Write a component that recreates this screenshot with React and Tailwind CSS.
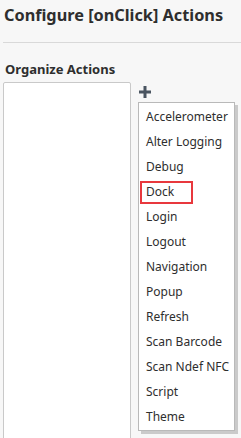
import React from 'react';

const actions = [
  'Accelerometer',
  'Alter Logging',
  'Debug',
  'Dock',
  'Login',
  'Logout',
  'Navigation',
  'Popup',
  'Refresh',
  'Scan Barcode',
  'Scan Ndef NFC',
  'Script',
  'Theme',
];

export default function App() {
  return (
    <div
      className="w-[241px] h-[438px] overflow-hidden bg-[#f7f7f7] text-[#2e2e2e]"
      style={{ fontFamily: '"Noto Sans", "Open Sans", sans-serif' }}
    >
      {/* header */}
      <div className="pl-[1px] pt-[2px] h-[43px] border-b border-[#d9d9d9] ml-[3px]">
        <h1 className="text-[16.3px] leading-[26px] font-bold">
          Configure [onClick] Actions
        </h1>
      </div>

      <div className="px-[3px] pt-[16px]">
        <h2 className="text-[13px] leading-[20px] font-bold pl-[2px]">Organize Actions</h2>

        <div className="flex mt-[3px]">
          <div className="w-[128px] h-[400px] shrink-0 bg-white border border-[#c9c9c9] rounded-[2px]"></div>

          <div className="flex flex-col ml-[7px]">
            <div className="h-[20px] pl-[1px] pt-[4px]">
              <svg width="12" height="12" viewBox="0 0 12 12">
                <rect x="0" y="4.5" width="12" height="3" fill="#4a5561" />
                <rect x="4.5" y="0" width="3" height="12" fill="#4a5561" />
              </svg>
            </div>
            <div className="w-[97px] bg-white border border-[#b9b9b9] py-[1px] shadow-[3px_3px_0_0_rgba(0,0,0,0.18)]">
              {actions.map((a) => (
                <div key={a} className="relative h-[25px] flex items-center pl-[7px] text-[12px] whitespace-nowrap">
                  {a === 'Dock' && (
                    <span className="absolute left-[1px] top-[2px] w-[53px] h-[23px] border-2 border-[#e8383d]"></span>
                  )}
                  <span>{a}</span>
                </div>
              ))}
            </div>
          </div>
        </div>
      </div>
    </div>
  );
}
